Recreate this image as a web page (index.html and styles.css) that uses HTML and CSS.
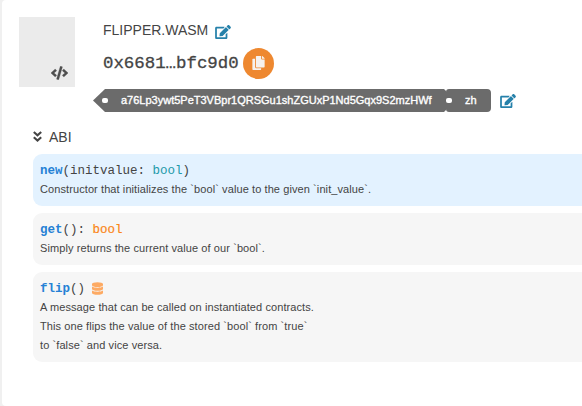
FILE: index.html
```html
<!DOCTYPE html>
<html lang="en">
<head>
<meta charset="utf-8">
<title>Contract</title>
<link rel="stylesheet" href="styles.css">
</head>
<body>
<main class="card">
  <header class="head">
    <div class="thumb">
      <svg class="code" viewBox="0 0 640 512"><path fill="#4e4e4e" stroke="#4e4e4e" stroke-width="10" d="M278.9 511.500l-61-17.700c-6.400-1.800-10-8.500-8.200-14.900L346.200 8.700c1.800-6.400 8.500-10 14.900-8.200l61 17.700c6.400 1.800 10 8.500 8.200 14.900L293.800 503.300c-1.900 6.400-8.500 10.100-14.900 8.200zm-114-112.200l43.500-46.400c4.600-4.900 4.300-12.700-.8-17.200L117 256l90.600-79.700c5.100-4.500 5.500-12.300.8-17.200l-43.500-46.400c-4.500-4.800-12.100-5.100-17-.5L3.800 247.200c-5.100 4.700-5.100 12.800 0 17.500l144.100 135.100c4.900 4.600 12.500 4.400 17-.5zm327.200.6l144.100-135.100c5.100-4.700 5.100-12.800 0-17.500L492.100 112.100c-4.800-4.500-12.400-4.300-17 .5L431.600 159c-4.600 4.900-4.300 12.700.8 17.200L523 256l-90.600 79.700c-5.100 4.500-5.500 12.300-.8 17.200l43.500 46.400c4.500 4.900 12.100 5.100 17 .6z"/></svg>
    </div>
    <div class="info">
      <div class="name"><span class="name-text">FLIPPER.WASM</span>
        <svg class="edit" viewBox="0 0 576 512"><path fill="#2681aa" d="M402.600 83.200l90.200 90.200c3.800 3.800 3.800 10 0 13.800L274.400 405.600l-92.800 10.300c-12.400 1.400-22.900-9.100-21.500-21.500l10.300-92.800L388.800 83.200c3.800-3.800 10-3.800 13.800 0zm162-22.900l-48.800-48.800c-15.200-15.200-39.900-15.200-55.200 0l-35.400 35.400c-3.800 3.800-3.800 10 0 13.800l90.200 90.200c3.800 3.800 10 3.800 13.800 0l35.400-35.400c15.200-15.300 15.200-40 0-55.200zM384 346.200V448H64V128h229.800c3.200 0 6.200-1.300 8.500-3.500l40-40c7.600-7.600 2.200-20.500-8.500-20.500H48C21.500 64 0 85.500 0 112v352c0 26.500 21.500 48 48 48h352c26.500 0 48-21.500 48-48V306.200c0-10.700-12.900-16-20.500-8.500l-40 40c-2.200 2.300-3.500 5.300-3.500 8.500z"/></svg>
      </div>
      <div class="hash"><span class="hash-text">0x6681…bfc9d0</span>
        <span class="copy"><svg viewBox="0 0 448 512"><path fill="#f6f2ee" d="M320 448v40c0 13.300-10.700 24-24 24H24c-13.300 0-24-10.700-24-24V120c0-13.300 10.700-24 24-24h72v296c0 30.900 25.100 56 56 56h168zm0-344V0H152c-13.300 0-24 10.700-24 24v368c0 13.300 10.700 24 24 24h272c13.300 0 24-10.700 24-24V128H344c-13.200 0-24-10.800-24-24zm121-31L375 7A24 24 0 0 0 358.100 0H352v96h96v-6.100a24 24 0 0 0-7-16.900z"/></svg></span>
      </div>
      <div class="tags">
        <span class="tag tag-main">a76Lp3ywt5PeT3VBpr1QRSGu1shZGUxP1Nd5Gqx9S2mzHWf</span>
        <span class="tag tag-small">zh</span>
        <svg class="edit tags-edit" viewBox="0 0 576 512"><path fill="#2681aa" d="M402.600 83.200l90.200 90.200c3.800 3.800 3.800 10 0 13.800L274.400 405.600l-92.800 10.300c-12.400 1.400-22.900-9.100-21.500-21.500l10.300-92.800L388.800 83.200c3.800-3.800 10-3.800 13.800 0zm162-22.900l-48.800-48.800c-15.200-15.200-39.900-15.200-55.200 0l-35.400 35.400c-3.800 3.800-3.800 10 0 13.800l90.200 90.200c3.800 3.800 10 3.800 13.800 0l35.400-35.400c15.200-15.300 15.200-40 0-55.200zM384 346.200V448H64V128h229.800c3.200 0 6.200-1.300 8.500-3.500l40-40c7.600-7.600 2.200-20.500-8.500-20.500H48C21.500 64 0 85.500 0 112v352c0 26.500 21.500 48 48 48h352c26.500 0 48-21.500 48-48V306.200c0-10.700-12.900-16-20.500-8.500l-40 40c-2.200 2.300-3.500 5.300-3.500 8.500z"/></svg>
      </div>
    </div>
  </header>
  <section class="abi">
    <div class="abi-title">
      <svg viewBox="0 0 9 11"><path d="M.8 1 4.500 4.300 8.200 1M.8 6.200 4.500 9.500 8.200 6.200" fill="none" stroke="#444" stroke-width="2.100"/></svg>
      <span>ABI</span>
    </div>
    <div class="message constructor">
      <div class="sig"><b>new</b>(initvalue: <span class="teal">bool</span>)</div>
      <div class="doc">Constructor that initializes the `bool` value to the given `init_value`.</div>
    </div>
    <div class="message">
      <div class="sig"><b>get</b>(): <span class="orange">bool</span></div>
      <div class="doc">Simply returns the current value of our `bool`.</div>
    </div>
    <div class="message">
      <div class="sig"><b>flip</b>()<svg class="db" viewBox="0 0 448 512"><path fill="#fdaa63" d="M448 73.100v45.700C448 159.100 347.700 192 224 192S0 159.100 0 118.900V73.100C0 32.900 100.300 0 224 0s224 32.900 224 73.100zM448 176v102.900C448 319.100 347.700 352 224 352S0 319.100 0 278.900V176c48.100 33.100 136.200 48.600 224 48.600S399.900 209.100 448 176zm0 160v102.900C448 479.100 347.700 512 224 512S0 479.100 0 438.900V336c48.100 33.100 136.200 48.600 224 48.600S399.900 369.100 448 336z"/></svg></div>
      <div class="doc">A message that can be called on instantiated contracts.<br>This one flips the value of the stored `bool` from `true`<br>to `false` and vice versa.</div>
    </div>
  </section>
</main>
</body>
</html>
```
FILE: styles.css
```css
* { box-sizing: border-box; }
body {
  margin: 0;
  background: #f0f0f0;
  color: #444;
  font-family: "Liberation Sans", Arial, sans-serif;
  overflow: hidden;
}
svg { display: block; flex: none; }
.card {
  height: 406px;
  margin-left: 2px;
  padding: 17px 0 0 17px;
  background: #fff;
  border-radius: 4px 0 0 4px;
}
.head { display: flex; height: 104px; }
.thumb {
  display: flex;
  align-items: flex-end;
  justify-content: flex-end;
  width: 56px;
  height: 70px;
  padding: 0 7px 7px 0;
  background: #ebebeb;
}
.code { width: 17px; height: 14px; }
.info { padding-left: 18px; }
.name {
  display: flex;
  align-items: center;
  height: 27px;
  padding-left: 10px;
  font-size: 14px;
}
.name-text { width: 112px; padding-bottom: 2px; }
.edit { width: 16px; height: 14px; margin-top: 3px; }
.hash {
  display: flex;
  align-items: center;
  height: 38px;
  padding-left: 10px;
  font: 17.4px "Liberation Mono", "Courier New", monospace;
  -webkit-text-stroke: 0.3px #444;
}
.hash-text { width: 140px; }
.copy {
  display: flex;
  align-items: center;
  justify-content: center;
  width: 31px;
  height: 31px;
  border-radius: 50%;
  background: #ee8830;
}
.copy svg { width: 13px; height: 14px; }
.tags { display: flex; align-items: center; height: 23px; margin-top: 7px; }
.tag {
  position: relative;
  height: 23px;
  background: #6b6b6b;
  color: #fff;
  font-size: 11px;
  line-height: 23px;
  white-space: nowrap;
  -webkit-text-stroke: 0.35px #fff;
}
.tag::before {
  content: "";
  position: absolute;
  top: 9px;
  width: 6px;
  height: 5px;
  border-radius: 2px;
  background: #fff;
}
.tag-main {
  width: 353px;
  padding-left: 28px;
  clip-path: polygon(0 50%, 12px 0, 351px 0, 353px 2px, 353px 21px, 351px 100%, 12px 100%);
}
.tag-main::before { left: 9px; }
.tag-small {
  width: 45px;
  padding-left: 19px;
  border-radius: 3px 4px 4px 3px;
}
.tag-small::before { left: 0; }
.tags-edit { margin: 0 0 0 9px; }
.abi { padding-left: 14px; }
.abi-title {
  display: flex;
  align-items: center;
  gap: 7px;
  height: 33px;
  padding-bottom: 2px;
  font-size: 14px;
}
.abi-title svg { width: 9px; height: 11px; }
.message {
  margin-bottom: 7px;
  padding: 9px 7px 7px;
  background: #f6f6f6;
  border-radius: 9px 0 0 9px;
}
.constructor { background: #e3f2ff; }
.sig {
  display: flex;
  align-items: center;
  height: 17px;
  white-space: pre;
  font: 12.5px/17px "Liberation Mono", "Courier New", monospace;
}
.sig b { color: #2581d5; }
.teal { color: #2299a9; }
.orange { color: #fb8618; -webkit-text-stroke: 0.2px #fb8618; }
.db { width: 11px; height: 13px; margin: -3px 0 0 7px; }
.doc {
  font-size: 11px;
  line-height: 19px;
  letter-spacing: 0.09px;
  white-space: nowrap;
}
```
